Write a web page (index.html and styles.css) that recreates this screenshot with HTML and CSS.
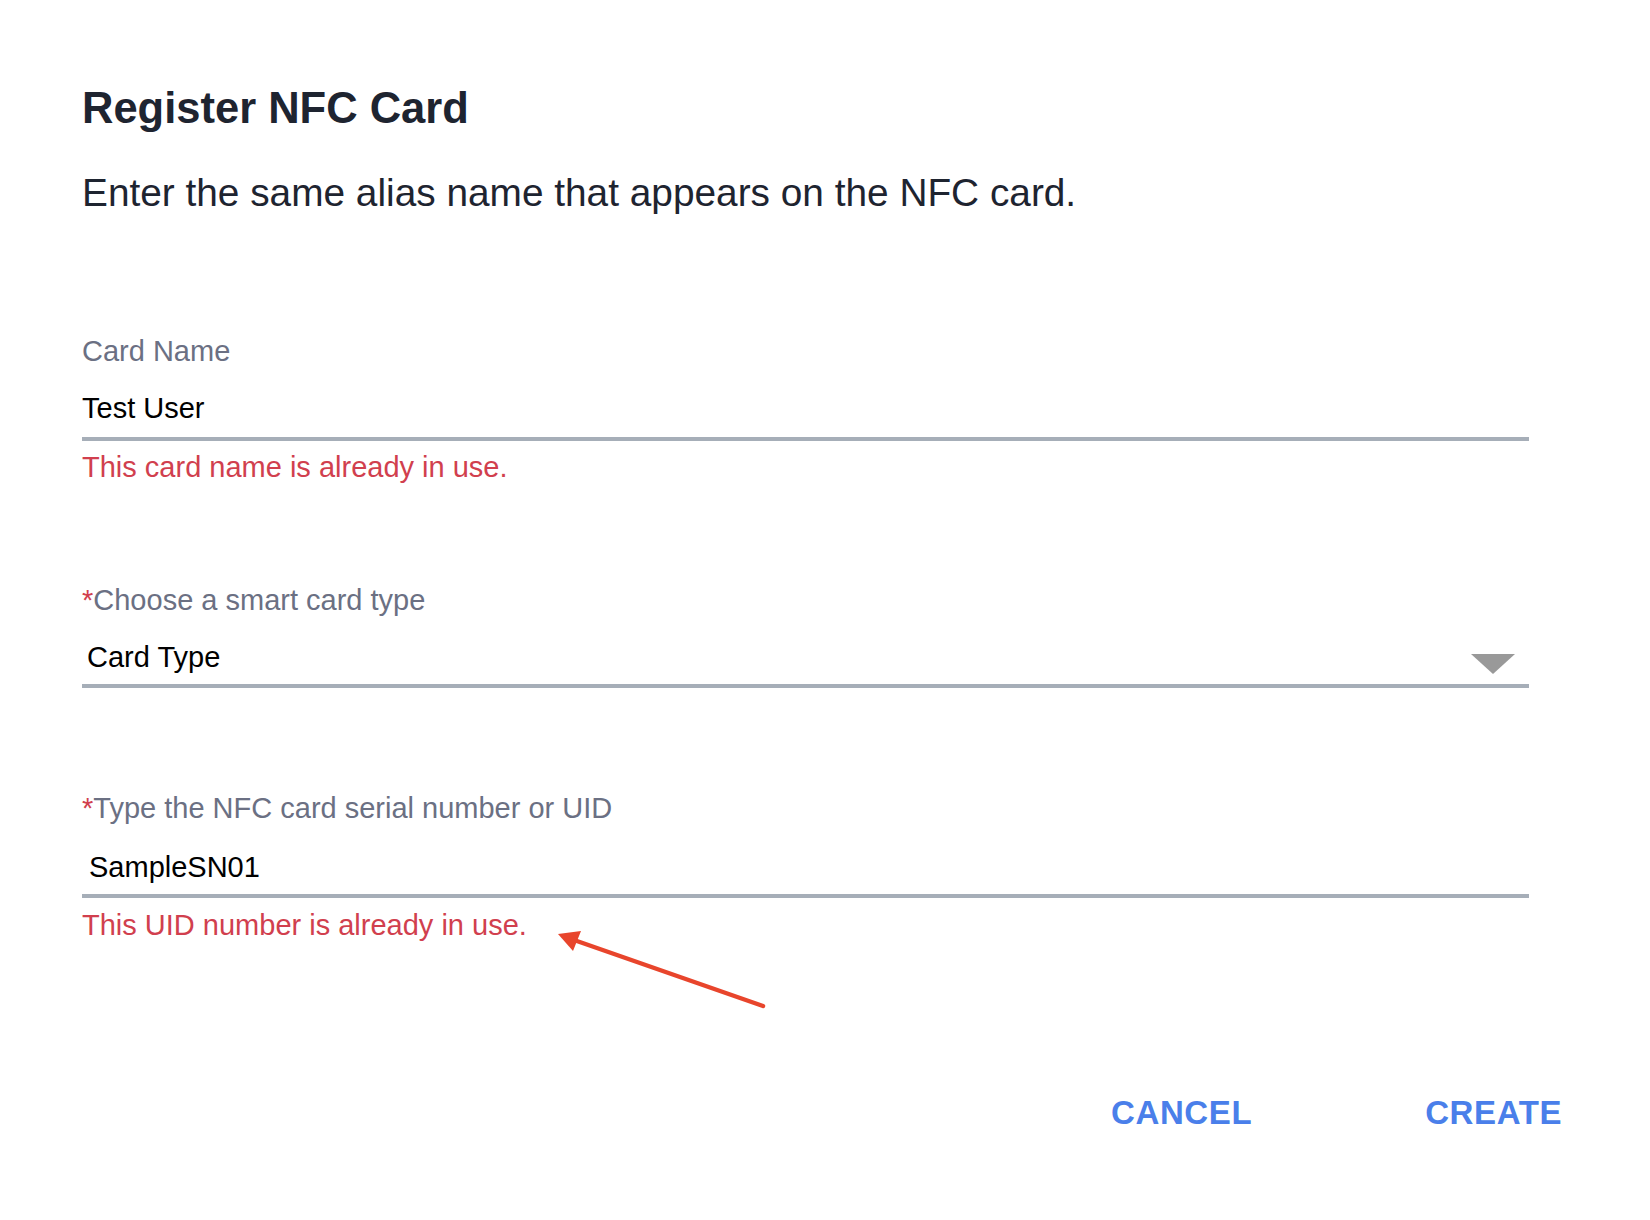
FILE: index.html
```html
<!DOCTYPE html>
<html lang="en">
<head>
<meta charset="utf-8">
<title>Register NFC Card</title>
<link rel="stylesheet" href="styles.css">
</head>
<body>
<div class="dialog">
  <h1 class="title">Register NFC Card</h1>
  <p class="subtitle">Enter the same alias name that appears on the NFC card.</p>

  <div class="field field--name">
    <div class="label">Card Name</div>
    <div class="control">
      <span class="value">Test User</span>
    </div>
    <div class="error">This card name is already in use.</div>
  </div>

  <div class="field field--type">
    <div class="label"><span class="req">*</span>Choose a smart card type</div>
    <div class="control control--select">
      <span class="value value--select">Card Type</span>
      <span class="caret"></span>
    </div>
  </div>

  <div class="field field--uid">
    <div class="label"><span class="req">*</span>Type the NFC card serial number or UID</div>
    <div class="control control--uid">
      <span class="value value--uid">SampleSN01</span>
    </div>
    <div class="error error--uid">This UID number is already in use.</div>
  </div>

  <div class="actions">
    <button class="btn">CANCEL</button>
    <button class="btn">CREATE</button>
  </div>

  <svg class="annotation" width="240" height="100" viewBox="0 0 240 100">
    <line x1="223" y1="86" x2="34" y2="20" stroke="#e8452c" stroke-width="4.5" stroke-linecap="round"/>
    <polygon points="18,14 41,11 33,31" fill="#e8452c"/>
  </svg>
</div>
</body>
</html>
```

FILE: styles.css
```css
* { box-sizing: border-box; }

html, body {
  margin: 0;
  padding: 0;
  background: #ffffff;
}

body {
  font-family: "Liberation Sans", Arial, Helvetica, sans-serif;
  color: #1e2430;
}

.dialog {
  position: relative;
  width: 1650px;
  min-height: 1220px;
  padding: 83px 88px 0 82px;
}

.title {
  margin: 0;
  font-size: 43.5px;
  line-height: 50px;
  font-weight: 700;
  color: #1e2430;
}

.subtitle {
  margin: 37px 0 0;
  font-size: 38.8px;
  line-height: 46px;
  color: #1e2430;
}

.field {
  width: 1447px;
}

.field--name { margin-top: 118px; }
.field--type { margin-top: 99px; }
.field--uid { margin-top: 103px; }

.label {
  font-size: 29px;
  line-height: 34px;
  color: #6b7083;
}

.req {
  color: #d13f4e;
}

.control {
  display: flex;
  align-items: flex-start;
  justify-content: space-between;
  margin-top: 23px;
  padding-bottom: 12px;
  border-bottom: 4.5px solid #a6aeb8;
}

.control--select { padding-bottom: 10px; }
.control--uid { margin-top: 25px; padding-bottom: 10px; }

.value {
  font-size: 29px;
  line-height: 34px;
  color: #000000;
}

.value--select { padding-left: 5px; }
.value--uid { padding-left: 7px; }

.caret {
  width: 0;
  height: 0;
  margin-top: 14px;
  margin-right: 14px;
  border-left: 22px solid transparent;
  border-right: 22px solid transparent;
  border-top: 20px solid #999999;
}

.error {
  margin-top: 9px;
  font-size: 29px;
  line-height: 34px;
  color: #d13f4e;
}

.error--uid { margin-top: 10px; }

.actions {
  display: flex;
  justify-content: flex-end;
  gap: 173px;
  margin-top: 152px;
}

.btn {
  padding: 0;
  border: 0;
  background: none;
  font-family: "Liberation Sans", Arial, Helvetica, sans-serif;
  font-size: 33px;
  line-height: 38px;
  font-weight: 700;
  letter-spacing: 0.6px;
  color: #4a7fea;
  cursor: pointer;
}

.annotation {
  position: absolute;
  left: 540px;
  top: 920px;
}
```
